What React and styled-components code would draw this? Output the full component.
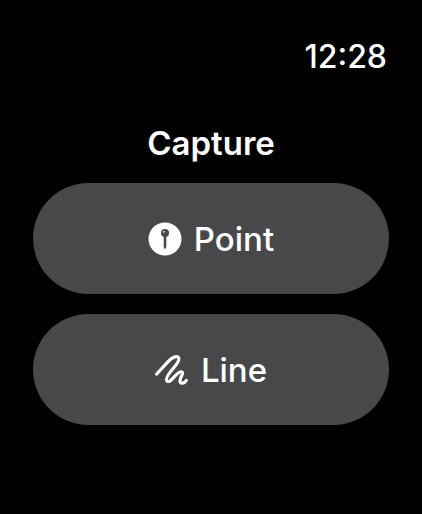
import React from 'react'
import styled, { createGlobalStyle } from 'styled-components'

const GlobalStyle = createGlobalStyle`
  * {
    box-sizing: border-box;
  }
  body {
    margin: 0;
    background-color: #000;
    color: #fff;
    font-family: Inter, 'Liberation Sans', sans-serif;
  }
`

const PointIcon = () => (
  <svg width="34" height="34" viewBox="0 0 34 34" aria-hidden="true">
    <circle cx="17" cy="17" r="16.5" fill="#fff" />
    <circle cx="17" cy="11" r="4" fill="#48484a" />
    <path d="M15.7 14h2.6v11l-1.3 2.5-1.3-2.5z" fill="#48484a" />
    <circle cx="15.8" cy="9.8" r="1.1" fill="#c8c8c8" />
  </svg>
)

const LineIcon = () => (
  <svg width="34" height="32" viewBox="24 24 102 96" aria-hidden="true">
    <path
      d="M29 84L64 46C74 35 88 28 94 34C100 41 90 54 79 67C66 82 54 98 60 105C67 111 76 98 86 88C94 80 102 75 106 79C110 84 97 96 99 107C102 115 112 112 118 103"
      fill="none"
      stroke="#fff"
      strokeWidth="9.5"
      strokeLinecap="round"
      strokeLinejoin="round"
    />
  </svg>
)

const actions = [
  { label: 'Point', Icon: PointIcon },
  { label: 'Line', Icon: LineIcon },
]

export default function App() {
  return (
    <Screen>
      <GlobalStyle />
      <StatusBar>
        <time>12:28</time>
      </StatusBar>
      <Title>Capture</Title>
      <ActionList>
        {actions.map(({ label, Icon }) => (
          <ActionButton key={label} type="button">
            <Icon />
            {label}
          </ActionButton>
        ))}
      </ActionList>
    </Screen>
  )
}

const Screen = styled.main`
  display: flex;
  flex-direction: column;
  min-height: 100vh;
  padding: 37px 33px;
`
const StatusBar = styled.header`
  display: flex;
  justify-content: flex-end;
  padding-right: 2px;
  font-size: 32px;
  font-weight: 500;
  line-height: 40px;
`
const Title = styled.h1`
  margin: 46px 0 20px;
  text-align: center;
  font-size: 33px;
  font-weight: 600;
  line-height: 40px;
`
const ActionList = styled.div`
  display: flex;
  flex-direction: column;
  gap: 20px;
`
const ActionButton = styled.button`
  display: flex;
  align-items: center;
  justify-content: center;
  gap: 12px;
  height: 111px;
  padding: 0;
  border: none;
  border-radius: 56px;
  background-color: #48484a;
  color: #fff;
  font-family: inherit;
  font-size: 33px;
  font-weight: 500;
  line-height: 40px;
  cursor: pointer;
`
